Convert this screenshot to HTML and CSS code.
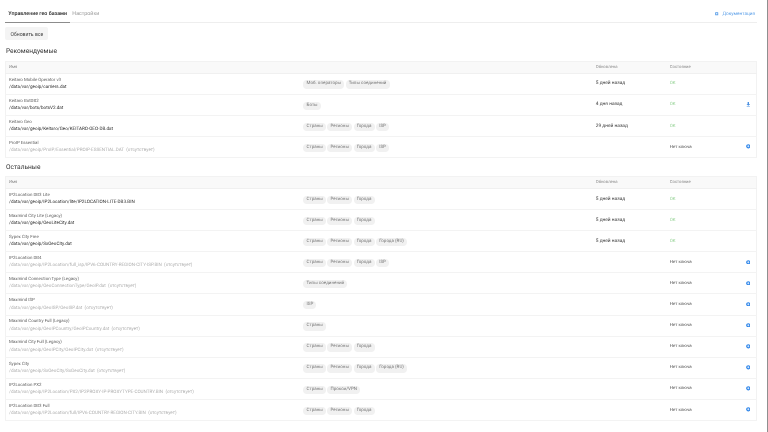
FILE: index.html
```html
<!DOCTYPE html>
<html lang="ru">
<head>
<meta charset="utf-8">
<title>Управление гео базами</title>
<link rel="stylesheet" href="styles.css">
</head>
<body>
<div class="page">
<main class="content">
  <nav class="tabs">
    <span class="tab active">Управление гео базами</span>
    <span class="tab">Настройки</span>
    <a class="doc"><svg class="doc-ico" viewBox="0 0 10 10"><rect x="0.5" y="0.5" width="9" height="9" rx="1" fill="#5b9fe8"/><rect x="3" y="3" width="4" height="4" fill="#dcebfb"/></svg>Документация</a>
  </nav>
  <button class="btn">Обновить все</button>
  <h2 class="title first">Рекомендуемые</h2>
  <table class="tbl">
    <thead><tr><th class="c-name">Имя</th><th class="c-tags"></th><th class="c-upd">Обновлена</th><th class="c-st">Состояние</th><th class="c-act"></th></tr></thead>
    <tbody>
      <tr><td><div class="nm">Keitaro Mobile Operator v3</div><div class="path">/data/var/geoip/carriers.dat</div></td><td><span class="tag">Моб. операторы</span><span class="tag">Типы соединений</span></td><td class="upd">5 дней назад</td><td class="ok">OK</td><td></td></tr>
      <tr><td><div class="nm">Keitaro BotDB2</div><div class="path">/data/var/bots/botsV2.dat</div></td><td><span class="tag">Боты</span></td><td class="upd">4 дня назад</td><td class="ok">OK</td><td class="act"><svg class="dl" viewBox="0 0 10 10"><path d="M3.5 0h3v4.5H9L5 8.2 1 4.5h2.5z M1.5 8.8h7V10h-7z" fill="#4a90e2"/></svg></td></tr>
      <tr><td><div class="nm">Keitaro Geo</div><div class="path">/data/var/geoip/Keitaro/Geo/KEITARO-GEO-DB.dat</div></td><td><span class="tag">Страны</span><span class="tag">Регионы</span><span class="tag">Города</span><span class="tag">ISP</span></td><td class="upd">29 дней назад</td><td class="ok">OK</td><td></td></tr>
      <tr><td><div class="nm">ProIP Essential</div><div class="path off">/data/var/geoip/ProIP/Essential/PROIP-ESSENTIAL.DAT &nbsp;(отсутствует)</div></td><td><span class="tag">Страны</span><span class="tag">Регионы</span><span class="tag">Города</span><span class="tag">ISP</span></td><td></td><td class="st">Нет ключа</td><td class="act"><svg class="gear" viewBox="0 0 10 10"><circle cx="5" cy="5" r="3.4" fill="#cfe3fa" stroke="#2f86ea" stroke-width="2.6"/></svg></td></tr>
    </tbody>
  </table>
  <h2 class="title">Остальные</h2>
  <table class="tbl">
    <thead><tr><th class="c-name">Имя</th><th class="c-tags"></th><th class="c-upd">Обновлена</th><th class="c-st">Состояние</th><th class="c-act"></th></tr></thead>
    <tbody>
      <tr><td><div class="nm">IP2Location DB3 Lite</div><div class="path">/data/var/geoip/IP2Location/lite/IP2LOCATION-LITE-DB3.BIN</div></td><td><span class="tag">Страны</span><span class="tag">Регионы</span><span class="tag">Города</span></td><td class="upd">5 дней назад</td><td class="ok">OK</td><td></td></tr>
      <tr><td><div class="nm">Maxmind City Lite (Legacy)</div><div class="path">/data/var/geoip/GeoLiteCity.dat</div></td><td><span class="tag">Страны</span><span class="tag">Регионы</span><span class="tag">Города</span></td><td class="upd">5 дней назад</td><td class="ok">OK</td><td></td></tr>
      <tr><td><div class="nm">Sypex City Free</div><div class="path">/data/var/geoip/SxGeoCity.dat</div></td><td><span class="tag">Страны</span><span class="tag">Регионы</span><span class="tag">Города</span><span class="tag">Города (RU)</span></td><td class="upd">5 дней назад</td><td class="ok">OK</td><td></td></tr>
      <tr><td><div class="nm">IP2Location DB4</div><div class="path off">/data/var/geoip/IP2Location/full_isp/IPV6-COUNTRY-REGION-CITY-ISP.BIN &nbsp;(отсутствует)</div></td><td><span class="tag">Страны</span><span class="tag">Регионы</span><span class="tag">Города</span><span class="tag">ISP</span></td><td></td><td class="st">Нет ключа</td><td class="act"><svg class="gear" viewBox="0 0 10 10"><circle cx="5" cy="5" r="3.4" fill="#cfe3fa" stroke="#2f86ea" stroke-width="2.6"/></svg></td></tr>
      <tr><td><div class="nm">Maxmind Connection Type (Legacy)</div><div class="path off">/data/var/geoip/GeoConnectionType/GeoIP.dat &nbsp;(отсутствует)</div></td><td><span class="tag">Типы соединений</span></td><td></td><td class="st">Нет ключа</td><td class="act"><svg class="gear" viewBox="0 0 10 10"><circle cx="5" cy="5" r="3.4" fill="#cfe3fa" stroke="#2f86ea" stroke-width="2.6"/></svg></td></tr>
      <tr><td><div class="nm">Maxmind ISP</div><div class="path off">/data/var/geoip/GeoISP/GeoISP.dat &nbsp;(отсутствует)</div></td><td><span class="tag">ISP</span></td><td></td><td class="st">Нет ключа</td><td class="act"><svg class="gear" viewBox="0 0 10 10"><circle cx="5" cy="5" r="3.4" fill="#cfe3fa" stroke="#2f86ea" stroke-width="2.6"/></svg></td></tr>
      <tr><td><div class="nm">Maxmind Country Full (Legacy)</div><div class="path off">/data/var/geoip/GeoIPCountry/GeoIPCountry.dat &nbsp;(отсутствует)</div></td><td><span class="tag">Страны</span></td><td></td><td class="st">Нет ключа</td><td class="act"><svg class="gear" viewBox="0 0 10 10"><circle cx="5" cy="5" r="3.4" fill="#cfe3fa" stroke="#2f86ea" stroke-width="2.6"/></svg></td></tr>
      <tr><td><div class="nm">Maxmind City Full (Legacy)</div><div class="path off">/data/var/geoip/GeoIPCity/GeoIPCity.dat &nbsp;(отсутствует)</div></td><td><span class="tag">Страны</span><span class="tag">Регионы</span><span class="tag">Города</span></td><td></td><td class="st">Нет ключа</td><td class="act"><svg class="gear" viewBox="0 0 10 10"><circle cx="5" cy="5" r="3.4" fill="#cfe3fa" stroke="#2f86ea" stroke-width="2.6"/></svg></td></tr>
      <tr><td><div class="nm">Sypex City</div><div class="path off">/data/var/geoip/SxGeoCity/SxGeoCity.dat &nbsp;(отсутствует)</div></td><td><span class="tag">Страны</span><span class="tag">Регионы</span><span class="tag">Города</span><span class="tag">Города (RU)</span></td><td></td><td class="st">Нет ключа</td><td class="act"><svg class="gear" viewBox="0 0 10 10"><circle cx="5" cy="5" r="3.4" fill="#cfe3fa" stroke="#2f86ea" stroke-width="2.6"/></svg></td></tr>
      <tr><td><div class="nm">IP2Location PX2</div><div class="path off">/data/var/geoip/IP2Location/PX2/IP2PROXY-IP-PROXYTYPE-COUNTRY.BIN &nbsp;(отсутствует)</div></td><td><span class="tag">Страны</span><span class="tag">Прокси/VPN</span></td><td></td><td class="st">Нет ключа</td><td class="act"><svg class="gear" viewBox="0 0 10 10"><circle cx="5" cy="5" r="3.4" fill="#cfe3fa" stroke="#2f86ea" stroke-width="2.6"/></svg></td></tr>
      <tr><td><div class="nm">IP2Location DB3 Full</div><div class="path off">/data/var/geoip/IP2Location/full/IPV6-COUNTRY-REGION-CITY.BIN &nbsp;(отсутствует)</div></td><td><span class="tag">Страны</span><span class="tag">Регионы</span><span class="tag">Города</span></td><td></td><td class="st">Нет ключа</td><td class="act"><svg class="gear" viewBox="0 0 10 10"><circle cx="5" cy="5" r="3.4" fill="#cfe3fa" stroke="#2f86ea" stroke-width="2.6"/></svg></td></tr>
    </tbody>
  </table>
</main>
<div class="scroll"></div>
</div>
</body>
</html>
```

FILE: styles.css
```css
html, body { margin: 0; padding: 0; height: 100%; overflow: hidden; background: #fff; }
body { font-family: Roboto, "Liberation Sans", sans-serif; color: #2b2b2b; text-rendering: geometricPrecision; }
.page { display: flex; width: 768px; height: 432px; overflow: hidden; }
.content { width: 757px; padding: 0 0 0 5.3px; box-sizing: border-box; flex: none; filter: blur(0.3px); }
.scroll { flex: 1; background: #fff; border-right: 1.5px solid #8f8f8f; }
.tabs { display: flex; align-items: center; height: 23px; padding-top: 6px; box-sizing: border-box; border-bottom: 1px solid #eeeeee; font-size: 5.3px; }
.tab { height: 16px; display: flex; align-items: center; padding: 0 3px; color: #9a9a9a; box-sizing: border-box; }
.tab + .tab { padding-left: 2.3px; }
.tab.active { color: #2d2d2d; font-weight: 500; border-bottom: 1px solid #8c8c8c; margin-bottom: -1px; }
.doc { margin-left: auto; margin-right: 2px; display: flex; align-items: center; gap: 3.8px; color: #5b9fe8; font-size: 4.7px; }
.doc-ico { width: 3.4px; height: 3.4px; }
.btn { display: block; margin: 4.3px 0 0; width: 43px; height: 13px; border: 0; border-radius: 2px; background: #f4f4f4; color: #444; font: 5.1px Roboto, sans-serif; padding: 0; }
.title { margin: 0; font-size: 6.6px; font-weight: 400; color: #333; line-height: 9px; padding: 5px 0.7px 3.7px; }
.title.first { padding-top: 7.1px; padding-bottom: 4.2px; }
.tbl { width: 751.7px; table-layout: fixed; border-collapse: collapse; border: 1px solid #f2f2f2; border-top: 0; }
.tbl th { box-sizing: border-box; background: #f9f9f9; height: 12.2px; padding: 0 0 0 2.7px; text-align: left; font-size: 4.2px; font-weight: 400; color: #8a8a8a; border-top: 1px solid #f2f2f2; border-bottom: 1px solid #f0f0f0; }
.c-name { width: 295px; }
.c-tags { width: 292.3px; }
.c-upd { width: 74px; }
.c-st { width: 60px; }
.tbl td { height: 21.1px; box-sizing: border-box; padding: 0 0 0 2.7px; border-bottom: 1px solid #f3f3f3; font-size: 4.8px; vertical-align: middle; white-space: nowrap; overflow: hidden; }
.nm { font-size: 4.4px; line-height: 7.3px; color: #5f5f5f; }
.path { font-size: 4.6px; line-height: 7.3px; color: #2d2d2d; }
.path.off { color: #b0b0b0; }
.tag { display: inline-block; vertical-align: middle; height: 8.3px; line-height: 8.3px; padding: 0 3.1px; margin: 1.5px 1.6px 0 0; border-radius: 4px; background: #f1f1f1; color: #777; font-size: 4.5px; }
.upd { color: #3a3a3a; }
.tbl .ok { color: #8fd08f; font-size: 4.4px; }
.tbl .st { color: #4a4a4a; font-size: 4.4px; }
.tbl .act { text-align: right; padding-right: 5.5px; }
.gear, .dl { width: 4.6px; height: 4.6px; display: inline-block; vertical-align: middle; }
```
